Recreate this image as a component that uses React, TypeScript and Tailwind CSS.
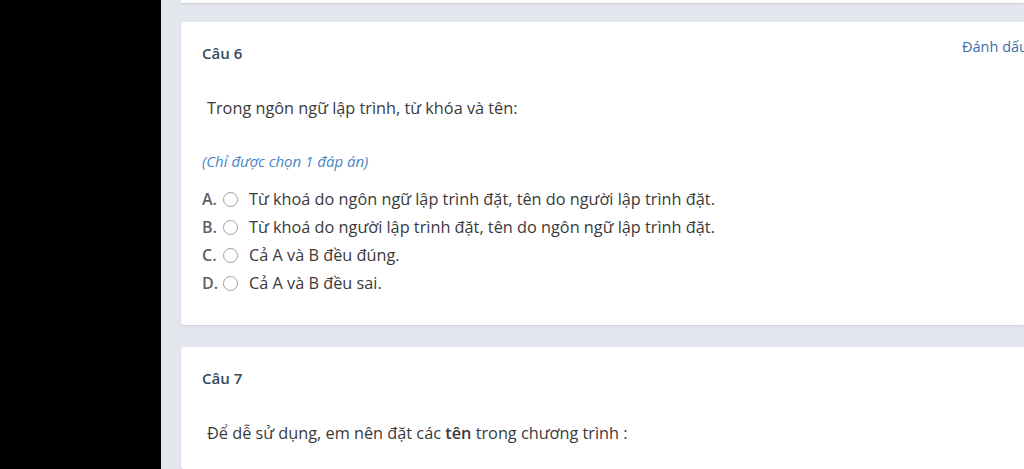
const options = [
  { key: 'A', text: 'Từ khoá do ngôn ngữ lập trình đặt, tên do người lập trình đặt.' },
  { key: 'B', text: 'Từ khoá do người lập trình đặt, tên do ngôn ngữ lập trình đặt.' },
  { key: 'C', text: 'Cả A và B đều đúng.' },
  { key: 'D', text: 'Cả A và B đều sai.' },
];

const Option = ({ letter, text }: { letter: string; text: string }) => (
  <div className="flex items-center h-[28px]">
    <span className="w-[20px] text-[16px] font-semibold text-[#5a626b]">{letter}.</span>
    <span className="ml-[1px] w-[15px] h-[15px] rounded-full border border-[#9aa0a6] bg-white" />
    <span className="ml-[11px] text-[16.3px] text-[#3a3a3a]">{text}</span>
  </div>
);

export default function App() {
  return (
    <div className="w-[1024px] h-[469px] overflow-hidden flex bg-black font-['Open_Sans',sans-serif]">
      <div className="w-[161px] shrink-0 bg-black" />
      <div className="flex-1 min-w-0 bg-[#e3e6ed] pl-[20px] flex flex-col">
        <div className="h-[3px] bg-white shadow-[0_1px_2px_rgba(0,0,0,0.12)] shrink-0" />
        <div className="mt-[19px] h-[303px] shrink-0 bg-white rounded-l-[3px] shadow-[0_1px_2px_rgba(0,0,0,0.12)] relative overflow-hidden pl-[21px] pt-[21px]">
          <span className="absolute left-[781px] top-[14px] whitespace-nowrap text-[14.5px] text-[#3d6fa6]">Đánh dấu</span>
          <div className="text-[15px] font-semibold text-[#34495c] leading-[20px]">Câu 6</div>
          <div className="mt-[34px] ml-[5px] text-[16.3px] text-[#3a3a3a] leading-[22px]">
            Trong ngôn ngữ lập trình, từ khóa và tên:
          </div>
          <div className="mt-[33px] text-[15px] italic text-[#4a86c5] leading-[18px]">(Chỉ được chọn 1 đáp án)</div>
          <div className="mt-[15px] flex flex-col">
            {options.map((o) => (
              <Option key={o.key} letter={o.key} text={o.text} />
            ))}
          </div>
        </div>
        <div className="mt-[22px] flex-1 bg-white rounded-l-[3px] shadow-[0_1px_2px_rgba(0,0,0,0.12)] pl-[21px] pt-[21px]">
          <div className="text-[15px] font-semibold text-[#34495c] leading-[20px]">Câu 7</div>
          <div className="mt-[34px] ml-[5px] text-[16.3px] text-[#3a3a3a] leading-[22px]">
            Để dễ sử dụng, em nên đặt các <span className="font-semibold">tên</span> trong chương trình :
          </div>
        </div>
      </div>
    </div>
  );
}
